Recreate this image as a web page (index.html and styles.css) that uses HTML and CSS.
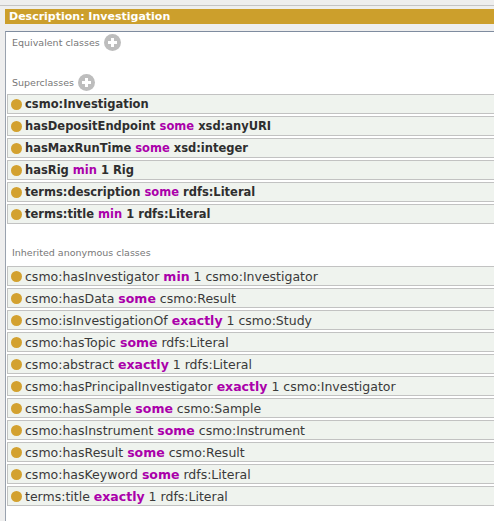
FILE: index.html
```html
<!DOCTYPE html>
<html>
<head>
<meta charset="utf-8">
<link rel="stylesheet" href="styles.css">
</head>
<body>
<div class="topline"></div>
<div class="header">Description: Investigation</div>
<div class="panel">
  <section class="sec sec-equiv">
    <div class="label"><span>Equivalent classes</span><span class="add"></span></div>
  </section>
  <section class="sec sec-super">
    <div class="label"><span>Superclasses</span><span class="add"></span></div>
    <div class="rows bold">
      <div class="row"><span class="dot"></span><span class="txt">csmo:Investigation</span></div>
      <div class="row"><span class="dot"></span><span class="txt">hasDepositEndpoint <b class="kw">some</b> xsd:anyURI</span></div>
      <div class="row"><span class="dot"></span><span class="txt">hasMaxRunTime <b class="kw">some</b> xsd:integer</span></div>
      <div class="row"><span class="dot"></span><span class="txt">hasRig <b class="kw">min</b> 1 Rig</span></div>
      <div class="row"><span class="dot"></span><span class="txt">terms:description <b class="kw">some</b> rdfs:Literal</span></div>
      <div class="row"><span class="dot"></span><span class="txt">terms:title <b class="kw">min</b> 1 rdfs:Literal</span></div>
    </div>
  </section>
  <section class="sec sec-inh">
    <div class="label"><span>Inherited anonymous classes</span></div>
    <div class="rows">
      <div class="row"><span class="dot"></span><span class="txt">csmo:hasInvestigator <b class="kw">min</b> 1 csmo:Investigator</span></div>
      <div class="row"><span class="dot"></span><span class="txt">csmo:hasData <b class="kw">some</b> csmo:Result</span></div>
      <div class="row"><span class="dot"></span><span class="txt">csmo:isInvestigationOf <b class="kw">exactly</b> 1 csmo:Study</span></div>
      <div class="row"><span class="dot"></span><span class="txt">csmo:hasTopic <b class="kw">some</b> rdfs:Literal</span></div>
      <div class="row"><span class="dot"></span><span class="txt">csmo:abstract <b class="kw">exactly</b> 1 rdfs:Literal</span></div>
      <div class="row"><span class="dot"></span><span class="txt">csmo:hasPrincipalInvestigator <b class="kw">exactly</b> 1 csmo:Investigator</span></div>
      <div class="row"><span class="dot"></span><span class="txt">csmo:hasSample <b class="kw">some</b> csmo:Sample</span></div>
      <div class="row"><span class="dot"></span><span class="txt">csmo:hasInstrument <b class="kw">some</b> csmo:Instrument</span></div>
      <div class="row"><span class="dot"></span><span class="txt">csmo:hasResult <b class="kw">some</b> csmo:Result</span></div>
      <div class="row"><span class="dot"></span><span class="txt">csmo:hasKeyword <b class="kw">some</b> rdfs:Literal</span></div>
      <div class="row"><span class="dot"></span><span class="txt">terms:title <b class="kw">exactly</b> 1 rdfs:Literal</span></div>
    </div>
  </section>
</div>
</body>
</html>
```
FILE: styles.css
```css
html, body {
  margin: 0;
  padding: 0;
  height: 100%;
  overflow: hidden;
}
body {
  background: #eeeeee;
  font-family: "DejaVu Sans", sans-serif;
  color: #333333;
  display: flex;
  flex-direction: column;
}
.topline {
  flex: none;
  height: 1px;
  margin-top: 5px;
  background: #c4c4c4;
}
.header {
  flex: none;
  margin: 3px 0 0 5px;
  height: 15px;
  line-height: 15px;
  background: #cc9f2c;
  color: #ffffff;
  font-weight: bold;
  font-size: 11px;
  padding-left: 4px;
}
.panel {
  flex: 1;
  margin: 7px 0 0 5px;
  border-top: 1px solid #7f8c9f;
  border-left: 1px solid #9aa2ae;
  background: #ffffff;
  overflow: hidden;
}
.label {
  display: flex;
  align-items: center;
  height: 17px;
  padding-left: 6px;
  font-size: 9.5px;
  color: #777777;
}
.add {
  display: inline-block;
  width: 17px;
  height: 17px;
  margin-left: 4px;
  border-radius: 50%;
  background: #bdbdbd;
  position: relative;
}
.add::before, .add::after {
  content: "";
  position: absolute;
  background: #ffffff;
}
.add::before {
  left: 4px;
  top: 7px;
  width: 9px;
  height: 3px;
}
.add::after {
  left: 7px;
  top: 4px;
  width: 3px;
  height: 9px;
}
.sec-equiv {
  padding-top: 2px;
  margin-bottom: 23px;
}
.rows {
  margin: 3px -4px 0 1px;
}
.sec-inh {
  margin-top: 20px;
}
.sec-inh .rows {
  margin-top: 5px;
}
.row {
  display: flex;
  align-items: center;
  height: 18px;
  border: 1px solid #c2c2c2;
  background: #eff3ee;
  margin-bottom: 2px;
  font-size: 12.5px;
  white-space: nowrap;
  color: #3a3a3a;
}
.rows.bold .row {
  font-weight: bold;
  font-size: 11.5px;
  color: #2e2e2e;
}
.dot {
  width: 11px;
  height: 11px;
  border-radius: 50%;
  background: #d3a12f;
  margin: 0 3px 0 3px;
  flex: none;
}
.kw {
  color: #aa00aa;
  font-weight: bold;
}
```
